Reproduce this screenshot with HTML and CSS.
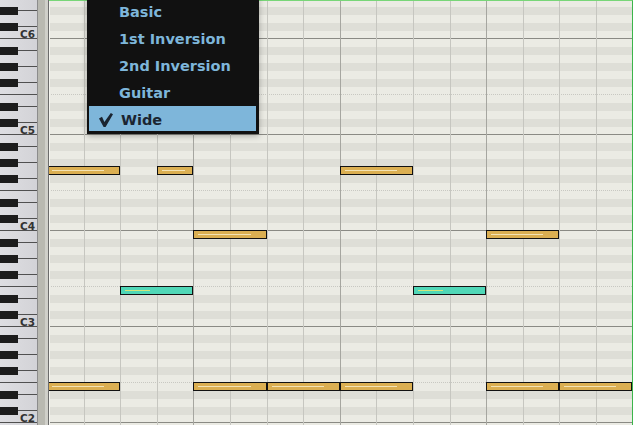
FILE: index.html
```html
<!DOCTYPE html>
<html>
<head>
<meta charset="utf-8">
<link rel="stylesheet" href="styles.css">
</head>
<body>
<div class="app">
  <div class="keys">
    <div class="oct"><span class="lbl">C6</span></div>
    <div class="oct"><span class="lbl">C5</span></div>
    <div class="oct"><span class="lbl">C4</span></div>
    <div class="oct"><span class="lbl">C3</span></div>
    <div class="oct"><span class="lbl">C2</span></div>
    <div class="oct"></div>
  </div>
  <div class="strip"></div>
  <div class="roll">
    <div class="rows">
      <div class="band"></div><div class="band"></div><div class="band"></div>
      <div class="band"></div><div class="band"></div><div class="band"></div>
    </div>
    <div class="cols">
      <div class="col w36"></div><div class="col w36"></div><div class="col w37"></div><div class="col w36 bar"></div>
      <div class="col w37"></div><div class="col w37"></div><div class="col w36"></div><div class="col w37 bar"></div>
      <div class="col w36"></div><div class="col w37"></div><div class="col w37"></div><div class="col w36 bar"></div>
      <div class="col w37"></div><div class="col w36"></div><div class="col w37"></div><div class="col w36"></div>
    </div>
    <!-- G4 -->
    <div class="note" style="left:-2px;top:166px;width:73px;--v:52px"></div>
    <div class="note" style="left:108px;top:166px;width:36px;--v:23px"></div>
    <div class="note" style="left:291px;top:166px;width:73px;--v:52px"></div>
    <!-- B3 -->
    <div class="note" style="left:144px;top:230px;width:74px;--v:53px"></div>
    <div class="note" style="left:437px;top:230px;width:73px;--v:52px"></div>
    <!-- E3 -->
    <div class="note teal" style="left:71px;top:286px;width:73px;--v:25px"></div>
    <div class="note teal" style="left:364px;top:286px;width:73px;--v:25px"></div>
    <!-- E2 -->
    <div class="note" style="left:-2px;top:382px;width:73px;--v:52px"></div>
    <div class="note" style="left:144px;top:382px;width:74px;--v:53px"></div>
    <div class="note" style="left:218px;top:382px;width:73px;--v:52px"></div>
    <div class="note" style="left:291px;top:382px;width:73px;--v:52px"></div>
    <div class="note" style="left:437px;top:382px;width:73px;--v:52px"></div>
    <div class="note" style="left:510px;top:382px;width:73px;--v:52px"></div>
  </div>
  <div class="menu">
    <div class="item">Basic</div>
    <div class="item">1st Inversion</div>
    <div class="item">2nd Inversion</div>
    <div class="item">Guitar</div>
    <div class="item sel"><svg class="check" width="14" height="14" viewBox="0 0 14 14"><path d="M0 5.5 L3 3.8 L5.4 9 L11.8 0 L14 1.2 L6.6 14 L4.6 14 Z"/></svg>Wide</div>
  </div>
</div>
</body>
</html>
```
FILE: styles.css
```css
html, body {
  margin: 0;
  padding: 0;
  background: #ebebe4;
  overflow: hidden;
}

.app {
  position: relative;
  width: 633px;
  height: 425px;
  display: flex;
  overflow: hidden;
}

/* keyboard */
.keys {
  width: 37px;
  flex: none;
  display: flex;
  flex-direction: column;
}

.oct {
  flex: none;
  height: 96px;
  display: flex;
  justify-content: flex-end;
  align-items: flex-end;
  background:
    linear-gradient(#1c1c1c, #1c1c1c) 0 8px / 18px 8px no-repeat,
    linear-gradient(#1c1c1c, #1c1c1c) 0 24px / 18px 8px no-repeat,
    linear-gradient(#1c1c1c, #1c1c1c) 0 40px / 18px 8px no-repeat,
    linear-gradient(#1c1c1c, #1c1c1c) 0 64px / 18px 8px no-repeat,
    linear-gradient(#1c1c1c, #1c1c1c) 0 80px / 18px 8px no-repeat,
    linear-gradient(#505050, #505050) 0 11px / 100% 1px no-repeat,
    linear-gradient(#505050, #505050) 0 27px / 100% 1px no-repeat,
    linear-gradient(#505050, #505050) 0 43px / 100% 1px no-repeat,
    linear-gradient(#505050, #505050) 0 55px / 100% 1px no-repeat,
    linear-gradient(#505050, #505050) 0 67px / 100% 1px no-repeat,
    linear-gradient(#505050, #505050) 0 83px / 100% 1px no-repeat,
    linear-gradient(#505050, #505050) 0 95px / 100% 1px no-repeat,
    linear-gradient(to right, #dedee2, #d3d3d7);
}

.keys .oct:first-child {
  margin-top: -57px;
}

.lbl {
  font-family: "DejaVu Sans", sans-serif;
  font-weight: bold;
  font-size: 10.5px;
  line-height: 10.5px;
  color: #333333;
  margin: 0 2px 0 0;
}

.strip {
  width: 12px;
  flex: none;
  background: linear-gradient(to right,
    #8c8c8c 0 1px,
    #b9b9b1 1px 8px,
    #cfcfc9 8px 11px,
    #6c6c6c 11px 12px);
}

/* roll */
.roll {
  position: relative;
  flex: 1;
  overflow: hidden;
}

.roll::after {
  content: "";
  position: absolute;
  inset: 0;
  border-top: 1px solid #78d678;
  border-right: 1px solid #3cb54b;
  z-index: 4;
  pointer-events: none;
}

.rows {
  display: flex;
  flex-direction: column;
  margin-top: -57px;
}

.band {
  flex: none;
  height: 96px;
  background:
    linear-gradient(#8a8a84, #8a8a84) 0 95px / 100% 1px no-repeat,
    repeating-linear-gradient(to right, #c8c8c2 0 1px, transparent 1px 2px) 0 55px / 100% 1px no-repeat,
    linear-gradient(to bottom,
      #ebebe4 0 8px, #deded7 8px 16px,
      #ebebe4 16px 24px, #deded7 24px 32px,
      #ebebe4 32px 40px, #deded7 40px 48px,
      #ebebe4 48px 64px, #deded7 64px 72px,
      #ebebe4 72px 80px, #deded7 80px 88px,
      #ebebe4 88px 96px);
}

.cols {
  position: absolute;
  inset: 0;
  display: flex;
}

.col {
  flex: none;
  box-sizing: border-box;
  border-right: 1px solid #c6c6c0;
}

.col:first-child {
  border-left: 1px solid #f4f4ef;
}

.col.bar {
  border-right-color: #a6a6a0;
}

.w36 { width: 36px; }
.w37 { width: 37px; }

.note {
  position: absolute;
  height: 9px;
  box-sizing: border-box;
  border: 1px solid #111111;
  background: #dbaf52;
  z-index: 2;
}

.note::after {
  content: "";
  position: absolute;
  left: 4px;
  top: 3px;
  height: 1px;
  width: var(--v);
  background: #f4e3b4;
}

.note.teal {
  background: #50d7b7;
}

.note.teal::after {
  background: #d2e67c;
}

/* menu */
.menu {
  position: absolute;
  left: 87px;
  top: -4px;
  width: 172px;
  box-sizing: border-box;
  padding: 2px 3px 3px 2px;
  background: #111111;
  display: flex;
  flex-direction: column;
  gap: 2px;
  z-index: 10;
  box-shadow: 0 2px 6px rgba(0, 0, 0, 0.28);
}

.item {
  height: 25px;
  box-sizing: border-box;
  padding: 2px 0 0 30px;
  display: flex;
  align-items: center;
  font-family: "DejaVu Sans", sans-serif;
  font-weight: bold;
  font-size: 14.5px;
  color: #7eb6da;
  white-space: nowrap;
}

.item.sel {
  background: #7eb6da;
  color: #1b2531;
  padding-left: 10px;
}

.check {
  flex: none;
  margin: 0 8px 0 0;
  fill: #1b2531;
}
```
